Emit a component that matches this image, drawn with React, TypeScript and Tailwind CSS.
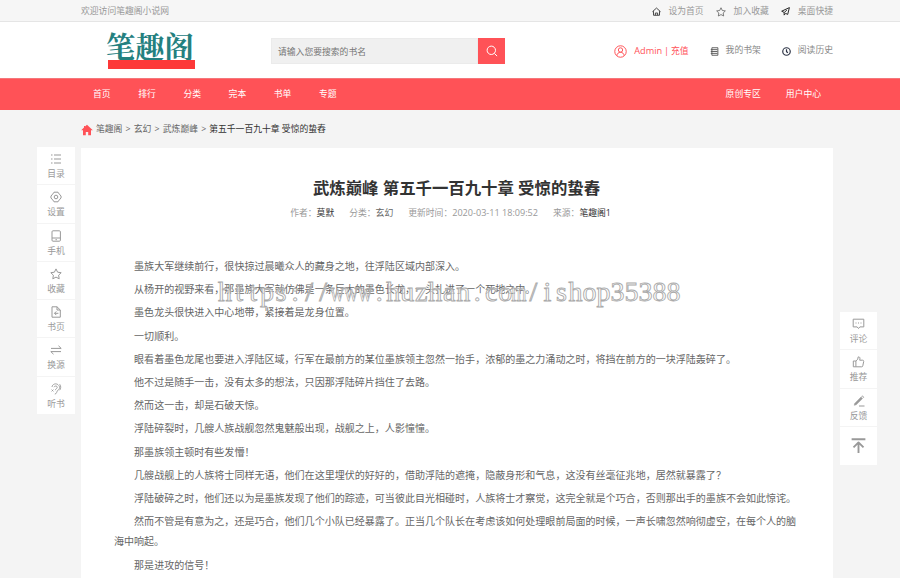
import type { ReactNode } from "react";

interface Item {
  name: string;
  icon: ReactNode;
}

const paragraphs = [
  "墨族大军继续前行，很快掠过晨曦众人的藏身之地，往浮陆区域内部深入。",
  "从杨开的视野来看，那墨族大军就仿佛是一条巨大的墨色长龙，一头扎进了一个死地之中。",
  "墨色龙头很快进入中心地带，紧接着是龙身位置。",
  "一切顺利。",
  "眼看着墨色龙尾也要进入浮陆区域，行军在最前方的某位墨族领主忽然一抬手，浓郁的墨之力涌动之时，将挡在前方的一块浮陆轰碎了。",
  "他不过是随手一击，没有太多的想法，只因那浮陆碎片挡住了去路。",
  "然而这一击，却是石破天惊。",
  "浮陆碎裂时，几艘人族战舰忽然鬼魅般出现，战舰之上，人影憧憧。",
  "那墨族领主顿时有些发懵！",
  "几艘战舰上的人族将士同样无语，他们在这里埋伏的好好的，借助浮陆的遮掩，隐蔽身形和气息，这没有丝毫征兆地，居然就暴露了？",
  "浮陆破碎之时，他们还以为是墨族发现了他们的踪迹，可当彼此目光相碰时，人族将士才察觉，这完全就是个巧合，否则那出手的墨族不会如此惊诧。",
  "然而不管是有意为之，还是巧合，他们几个小队已经暴露了。正当几个队长在考虑该如何处理眼前局面的时候，一声长啸忽然响彻虚空，在每个人的脑海中响起。",
  "那是进攻的信号！",
];

function Icon({
  className = "size-3",
  width = 1,
  children,
}: {
  className?: string;
  width?: number;
  children: ReactNode;
}) {
  return (
    <svg
      viewBox="0 0 12 12"
      className={className}
      fill="none"
      stroke="currentColor"
      strokeWidth={width}
      strokeLinejoin="round"
    >
      {children}
    </svg>
  );
}

const star = "M6 .9l1.6 3.3 3.6.5-2.6 2.5.6 3.6L6 9.1l-3.2 1.7.6-3.6L.8 4.7l3.6-.5z";

const leftItems: Item[] = [
  {
    name: "目录",
    icon: (
      <Icon width={1.2}>
        <path d="M1 2h1.5M4 2h7M1 6h1.5M4 6h7M1 10h1.5M4 10h7" />
      </Icon>
    ),
  },
  {
    name: "设置",
    icon: (
      <Icon>
        <path d="M4 1.2h4l.8 1.5 1.4 1.1L11.3 6l-1.1 2.2-1.4 1.1-.8 1.5H4l-.8-1.5-1.4-1.1L.7 6l1.1-2.2 1.4-1.1z" />
        <circle cx="6" cy="6" r="1.8" />
      </Icon>
    ),
  },
  {
    name: "手机",
    icon: (
      <Icon>
        <rect x="2" y=".8" width="8.4" height="10.4" rx="1" />
        <path d="M2 8h8.4M5.5 9.7h1.4" />
      </Icon>
    ),
  },
  {
    name: "收藏",
    icon: (
      <Icon>
        <path d={star} />
      </Icon>
    ),
  },
  {
    name: "书页",
    icon: (
      <Icon>
        <path d="M7 .8H2v10.4h8.3V4zM7 .8V4h3.3M8.4 7.3H4.6M6.3 5.4L4.5 7.3l1.8 1.8" />
      </Icon>
    ),
  },
  {
    name: "换源",
    icon: (
      <Icon>
        <path d="M1 4.4h10.2L8.5 1.8M11 7.6H.8l2.7 2.6" />
      </Icon>
    ),
  },
  {
    name: "听书",
    icon: (
      <Icon width={0.9}>
        <path d="M2 4c.3-3 4-4 6-2.3 2.6 2.2 1.7 4.3 0 5.4-1.4 1-1 3.8-3.2 4M4 4.2c.5-1.8 3.6-1.5 3.2.4C6.9 6 5.4 5.6 5.4 7.2M1.6 6.6l1.8 1.8M3.4 6.6L1.6 8.4M9.7 1.2c1.5 2 1.2 4.4 0 6" />
      </Icon>
    ),
  },
];

const rightItems: Item[] = [
  {
    name: "评论",
    icon: (
      <Icon className="h-3 w-[13px]">
        <path d="M.7 1.2h10.6v7.7H7.4L6 10.5 4.6 8.9H.7z" />
        <path d="M3 5h1M5.5 5h1M8 5h1" />
      </Icon>
    ),
  },
  {
    name: "推荐",
    icon: (
      <Icon className="h-3 w-[13px]">
        <path d="M.8 5h2.6v5.8H.8zM3.4 5l1.8-1.7.5-2.4c1.9-.2 2 1.3 1.5 3.3h3c.9 0 1.1.8 1 1.3l-.9 4.3c-.1.7-.5 1-1.1 1H3.4" />
      </Icon>
    ),
  },
  {
    name: "反馈",
    icon: (
      <Icon>
        <path
          d="M1.7 8.4L8 2.1l1.5 1.5-6.3 6.2-2 .5z"
          fill="currentColor"
          strokeWidth=".5"
        />
        <path d="M8.6 1.5l.8-.6 1.2 1.3-.6.7M6 11h5.5" />
      </Icon>
    ),
  },
];

const quickLinks: Item[] = [
  {
    name: "设为首页",
    icon: (
      <Icon className="size-[9px] text-[#444]" width={1.3}>
        <path d="M.6 6.3L6 1.4l5.4 4.9M2 5.5V11h8V5.5M4.5 11V8h3v3" />
      </Icon>
    ),
  },
  {
    name: "加入收藏",
    icon: (
      <Icon className="size-[10px] text-[#666]">
        <path d={star} />
      </Icon>
    ),
  },
  {
    name: "桌面快捷",
    icon: (
      <Icon className="size-[9px] text-[#222]" width={1.3}>
        <path d="M11.2.8L.9 5.6l3.3 1.6v3.6l2-2.3 2.7 1.4zM4.4 7.2l3.4-3" />
      </Icon>
    ),
  },
];

const watermark = "https://www.huzhan.com/ishop35388";

function Sidebar({ items, children }: { items: Item[]; children?: ReactNode }) {
  return (
    <div className="flex flex-col gap-px text-[#999]">
      {items.map((item) => (
        <div
          key={item.name}
          className="flex h-[37.3px] flex-col items-center bg-white pt-[6px]"
        >
          {item.icon}
          <span className="mt-[3px] text-[8.8px] leading-[13px]">
            {item.name}
          </span>
        </div>
      ))}
      {children}
    </div>
  );
}

function App() {
  return (
    <div className="h-[578px] w-[900px] overflow-hidden bg-[#f4f4f4] font-['Open_Sans','Noto_Sans_CJK_SC',sans-serif] text-[8.8px] whitespace-nowrap text-[#666]">
      <div className="flex h-[22px] items-center justify-between border-b border-[#e5e5e5] bg-[#f6f6f6] pt-[2px] pr-[67px] pl-[81px] text-[#999]">
        <span>欢迎访问笔趣阁小说网</span>
        <div className="flex gap-[12.5px]">
          {quickLinks.map((link) => (
            <span key={link.name} className="flex items-center gap-[7.5px]">
              {link.icon}
              {link.name}
            </span>
          ))}
        </div>
      </div>

      <header className="flex h-14 items-center bg-white pt-[2px] pr-[67px] pl-[106px]">
        <div className="h-9 w-[90px]">
          <div className="h-[27px] font-['Noto_Serif_CJK_SC','Noto_Sans_CJK_SC',serif] text-[29.3px] leading-[25px] font-bold text-[#24807f]">
            笔趣阁
          </div>
          <div className="relative ml-[2px] h-[9px] w-[87px] bg-[#fd3838]" />
        </div>
        <div className="ml-[75px] flex h-[26px] w-[234px]">
          <div className="flex flex-1 items-center border border-[#ebebeb] bg-[#f0f0f0] pt-[3px] pl-[6px] text-[#757575]">
            请输入您要搜索的书名
          </div>
          <div className="flex w-[27px] items-center justify-center bg-[#ff5257] text-white">
            <Icon className="size-3">
              <circle cx="5.3" cy="5.3" r="4.2" />
              <path d="M8.4 8.4l2.7 2.7" />
            </Icon>
          </div>
        </div>
        <div className="ml-auto flex items-center text-[#888]">
          <span className="flex items-center gap-[7px] text-[#ff5257]">
            <Icon className="size-[13px]" width={0.9}>
              <circle cx="6" cy="6" r="5.3" />
              <circle cx="6" cy="4.6" r="2" />
              <path d="M2.7 9.9c0-4.2 6.6-4.2 6.6 0" />
            </Icon>
            <span>
              <span className="text-[9.2px] [word-spacing:-0.5px]">
                Admin |{" "}
              </span>
              充值
            </span>
          </span>
          <span className="ml-[21px] flex items-center gap-[7px]">
            <Icon className="size-[9px] text-[#555]" width={1.2}>
              <path d="M2.5 1h8v10h-8zM1 3.5h9M1 6h9M1 8.5h9" />
            </Icon>
            我的书架
          </span>
          <span className="ml-[21px] flex items-center gap-[7px]">
            <Icon className="size-[9px] text-[#2d3446]" width={1.6}>
              <circle cx="6" cy="6" r="5" />
              <path d="M6 3v3.3l2 1.2" />
            </Icon>
            阅读历史
          </span>
        </div>
      </header>

      <nav className="flex h-8 items-center justify-between border-t border-[#f4777b] bg-[#ff5257] pr-[79px] pl-[93px] text-white">
        <div className="flex gap-[27.6px]">
          {["首页", "排行", "分类", "完本", "书单", "专题"].map((name) => (
            <span key={name}>{name}</span>
          ))}
        </div>
        <div className="flex gap-[25px]">
          <span>原创专区</span>
          <span>用户中心</span>
        </div>
      </nav>

      <div className="flex h-[38px] items-center pt-px pl-[81px]">
        <svg
          viewBox="0 0 12 12"
          className="mr-[3px] size-[12px] text-[#ff5257]"
          fill="currentColor"
        >
          <path d="M6 .7l5.8 5.6H10v5H7.2V8H4.8v3.3H2v-5H.2L3 3.5V2h1v.6z" />
        </svg>
        <span className="[word-spacing:0.9px]">
          笔趣阁 &gt; 玄幻 &gt; 武炼巅峰 &gt;
        </span>
        <span className="ml-[3px] text-[#333]">
          第五千一百九十章 受惊的蛰舂
        </span>
      </div>

      <main className="relative flex h-[430px] pl-[37px]">
        <div className="-mt-px w-[38px]">
          <Sidebar items={leftItems} />
        </div>
        <article className="ml-[6px] w-[752px] bg-white pr-[30px] pl-[33px]">
          <h1 className="pt-[27px] pr-1 text-center text-[16.4px] leading-[26px] font-bold text-[#333]">
            武炼巅峰 第五千一百九十章 受惊的蛰舂
          </h1>
          <div className="mt-[5px] flex justify-center gap-[15px] pr-4 leading-[14px] text-[#999]">
            <span>
              作者：<span className="text-[#333]">莫默</span>
            </span>
            <span>
              分类：<span className="text-[#666]">玄幻</span>
            </span>
            <span>
              更新时间：<span className="text-[9.1px]">2020-03-11 18:09:52</span>
            </span>
            <span>
              来源：<span className="text-[#333]">笔趣阁1</span>
            </span>
          </div>
          <div className="mt-[36px] space-y-[3.14px] text-[10.04px] leading-[20.08px] whitespace-normal text-[#666]">
            {paragraphs.map((text) => (
              <p key={text} className="indent-[2em]">
                {text}
              </p>
            ))}
          </div>
        </article>
        <div className="mt-[164px] ml-[7px] w-[37px]">
          <Sidebar items={rightItems}>
            <div className="flex h-[38px] items-center justify-center bg-white">
              <Icon className="size-[15px]" width={1.5}>
                <path d="M.5 1h11M6 12V4M2 7.5l4-4 4 4" />
              </Icon>
            </div>
          </Sidebar>
        </div>

        {/* outlined site address over the text */}
        <div className="absolute top-[128px] left-[218px] flex font-['Liberation_Serif',serif] text-[28px] leading-[32px] text-white/60 [-webkit-text-stroke:0.9px_#aaa]">
          {watermark.split("").map((c, i) => (
            <span key={i} className="flex w-[14.03px] justify-center">
              <span
                className={
                  c === "w" || c === "m" ? "inline-block scale-x-70" : ""
                }
              >
                {c}
              </span>
            </span>
          ))}
        </div>
      </main>
    </div>
  );
}

export default App;
